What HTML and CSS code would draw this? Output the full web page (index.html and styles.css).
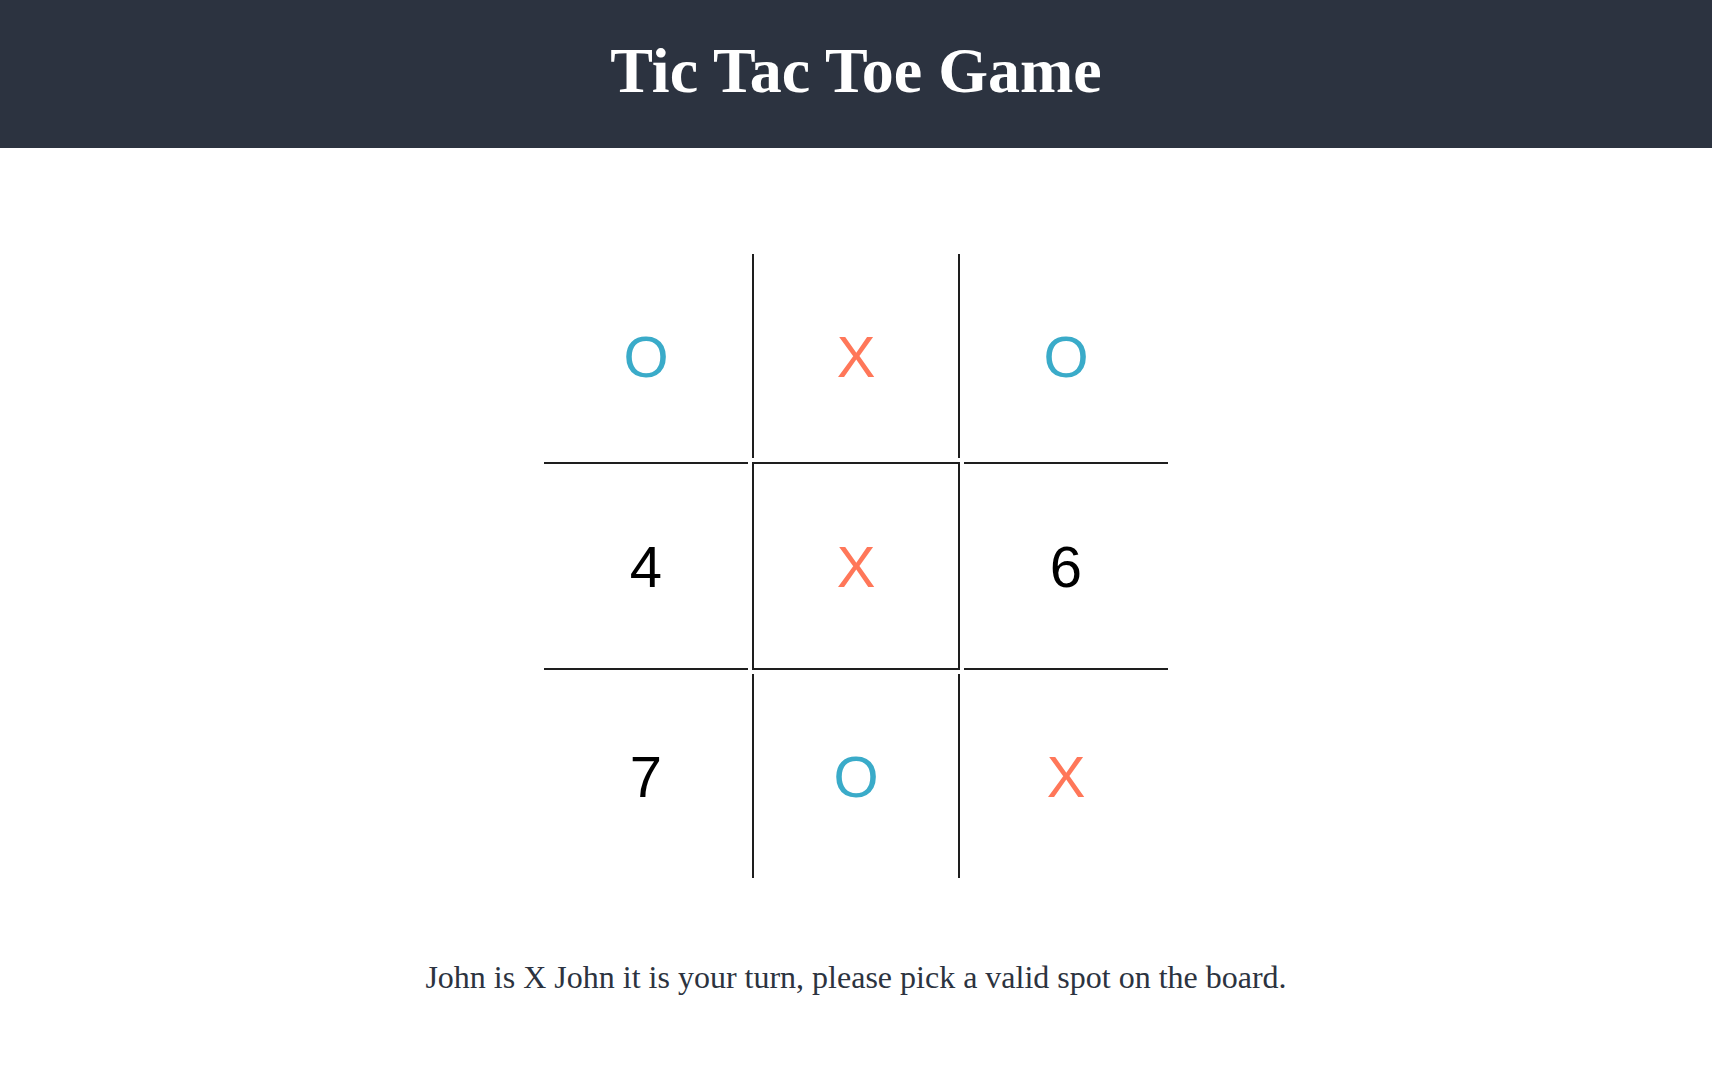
FILE: index.html
```html
<!DOCTYPE html>
<html lang="en">
<head>
<meta charset="utf-8">
<title>Tic Tac Toe Game</title>
<link rel="stylesheet" href="styles.css">
</head>
<body>
<header class="site-header">
  <h1 class="title">Tic Tac Toe Game</h1>
</header>
<main class="game">
  <div class="board">
    <div class="cell c1 o">O</div>
    <div class="cell c2 x">X</div>
    <div class="cell c3 o">O</div>
    <div class="cell c4">4</div>
    <div class="cell c5 x">X</div>
    <div class="cell c6">6</div>
    <div class="cell c7">7</div>
    <div class="cell c8 o">O</div>
    <div class="cell c9 x">X</div>
  </div>
  <p class="message">John is X John it is your turn, please pick a valid spot on the board.</p>
</main>
</body>
</html>
```
FILE: styles.css
```css
html, body {
  margin: 0;
  padding: 0;
  background: #ffffff;
}

body {
  font-family: "Liberation Serif", "Times New Roman", serif;
}

.site-header {
  background: #2c3340;
  height: 148px;
  display: flex;
  align-items: center;
  justify-content: center;
}

.title {
  margin: 0;
  color: #ffffff;
  font-family: "Liberation Serif", "Times New Roman", serif;
  font-weight: bold;
  font-size: 64px;
  line-height: 1;
  padding-bottom: 7px;
}

.game {
  display: flex;
  flex-direction: column;
  align-items: center;
  padding-top: 106px;
}

.board {
  display: grid;
  grid-template-columns: repeat(3, auto);
  gap: 4px;
}

.cell {
  width: 204px;
  height: 204px;
  display: flex;
  align-items: center;
  justify-content: center;
  font-family: "Liberation Sans", Arial, sans-serif;
  font-size: 58px;
  color: #000000;
  border: 0 solid #1e1e1e;
}

.c2, .c8 {
  border-left-width: 2px;
  border-right-width: 2px;
}

.c4, .c6 {
  border-top-width: 2px;
  border-bottom-width: 2px;
}

.c5 {
  border-width: 2px;
}

.o { color: #3aabc9; }
.x { color: #ff7759; }

.message {
  margin: 81px 0 0;
  font-size: 32px;
  color: #2c3340;
}
```
